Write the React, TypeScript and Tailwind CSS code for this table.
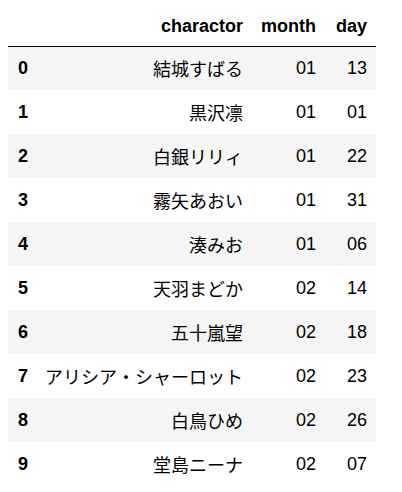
const rows = [
  ["結城すばる", "01", "13"],
  ["黒沢凛", "01", "01"],
  ["白銀リリィ", "01", "22"],
  ["霧矢あおい", "01", "31"],
  ["湊みお", "01", "06"],
  ["天羽まどか", "02", "14"],
  ["五十嵐望", "02", "18"],
  ["アリシア・シャーロット", "02", "23"],
  ["白鳥ひめ", "02", "26"],
  ["堂島ニーナ", "02", "07"],
];

export default function App() {
  return (
    <div
      className="bg-white pl-[8px] text-black text-[18px] leading-[normal]"
      style={{ fontFamily: '"Liberation Sans", Arial, "Noto Sans CJK JP", sans-serif' }}
    >
      <table className="table-fixed border-collapse w-[368px]">
        <colgroup>
          <col className="w-[28px]" />
          <col className="w-[217px]" />
          <col className="w-[72px]" />
          <col className="w-[51px]" />
        </colgroup>
        <thead>
          <tr className="h-[46px] border-b border-black">
            <th className="px-[9px] pb-[9px] align-bottom"></th>
            <th className="pr-[10px] pb-[9px] align-bottom text-right font-bold">charactor</th>
            <th className="pr-[9px] pb-[9px] align-bottom text-right font-bold">month</th>
            <th className="pr-[9px] pb-[9px] align-bottom text-right font-bold">day</th>
          </tr>
        </thead>
        <tbody>
          {rows.map((r, i) => (
            <tr key={i} className={i % 2 === 0 ? "h-[44px] bg-[#f5f5f5]" : "h-[44px] bg-white"}>
              <th className="pl-[10px] text-left font-bold">{i}</th>
              <td className="pr-[10px] text-right whitespace-nowrap">{r[0]}</td>
              <td className="pr-[9px] text-right">{r[1]}</td>
              <td className="pr-[9px] text-right">{r[2]}</td>
            </tr>
          ))}
        </tbody>
      </table>
    </div>
  );
}
